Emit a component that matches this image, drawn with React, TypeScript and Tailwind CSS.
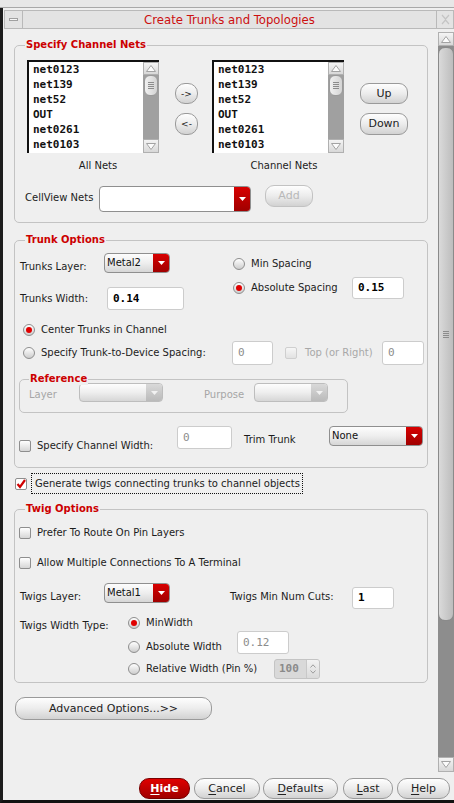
import React from "react";

const F = "font-['DejaVu_Sans',sans-serif]";
const MONO = "font-['DejaVu_Sans_Mono',monospace]";

function Legend({ children, className = "" }: { children: React.ReactNode; className?: string }) {
  return (
    <span className={`absolute -top-[7px] px-[1px] bg-[#efefef] text-[#cc0000] font-bold text-[10px] leading-[12px] ${className}`}>
      {children}
    </span>
  );
}

function DownTri({ color = "#fff" }: { color?: string }) {
  return (
    <svg width="7" height="4" viewBox="0 0 7 4">
      <polygon points="0,0 7,0 3.5,4" fill={color} />
    </svg>
  );
}

function Combo({
  className,
  label = "",
  disabled = false,
  white = false,
}: {
  className: string;
  label?: string;
  disabled?: boolean;
  white?: boolean;
}) {
  return (
    <div
      className={`flex shrink-0 rounded-[4px] border overflow-hidden ${
        disabled ? "border-[#bdbdbd]" : "border-[#8f8f8f]"
      } ${white ? "bg-white" : "bg-linear-to-b from-[#fdfdfd] via-[#eeeeee] to-[#d6d6d6]"} ${className}`}
    >
      <div className="flex-1 pl-[2px] flex items-center text-[#111]">{label}</div>
      <div
        className={`w-[16px] flex items-center justify-center ${
          disabled ? "bg-linear-to-b from-[#d9d9d9] to-[#bababa]" : "bg-linear-to-b from-[#d80000] to-[#a00000]"
        }`}
      >
        <DownTri color={disabled ? "#f2f2f2" : "#fff"} />
      </div>
    </div>
  );
}

function Btn({
  className,
  children,
  disabled = false,
}: {
  className: string;
  children: React.ReactNode;
  disabled?: boolean;
}) {
  return (
    <div
      className={`flex shrink-0 items-center justify-center rounded-[9px] border bg-linear-to-b from-[#fefefe] via-[#ececec] to-[#d2d2d2] ${
        disabled ? "text-[#b8b8b8] border-[#c2c2c2]" : "text-[#222] border-[#9a9a9a]"
      } ${className}`}
    >
      {children}
    </div>
  );
}

function Radio({ on = false }: { on?: boolean }) {
  return (
    <div className="w-[12px] h-[12px] shrink-0 rounded-full border border-[#8e8e8e] bg-linear-to-b from-[#ffffff] to-[#cdcdcd] flex items-center justify-center">
      {on && <div className="w-[6px] h-[6px] rounded-full bg-[#e00000]" />}
    </div>
  );
}

function Check({ on = false, disabled = false }: { on?: boolean; disabled?: boolean }) {
  return (
    <div
      className={`w-[12px] h-[12px] shrink-0 rounded-[2px] border flex items-center justify-center ${
        disabled
          ? "border-[#cfcfcf] bg-linear-to-b from-[#f6f6f6] to-[#e2e2e2]"
          : on
          ? "border-[#8e8e8e] bg-white"
          : "border-[#8e8e8e] bg-linear-to-b from-[#ffffff] to-[#d6d6d6]"
      }`}
    >
      {on && (
        <svg width="10" height="10" viewBox="0 0 10 10">
          <path d="M1.5 5 L4 8 L9 1" fill="none" stroke="#d00000" strokeWidth="2.2" />
        </svg>
      )}
    </div>
  );
}

function Field({
  className,
  value,
  disabled = false,
}: {
  className: string;
  value: string;
  disabled?: boolean;
}) {
  return (
    <div
      className={`shrink-0 bg-white border border-[#cccccc] rounded-[3px] flex items-center pl-[5px] ${MONO} text-[11px] ${
        disabled ? "text-[#8c8c8c]" : "text-black font-bold"
      } ${className}`}
    >
      {value}
    </div>
  );
}

function ScrollArrow({ up, className }: { up: boolean; className: string }) {
  return (
    <div
      className={`flex items-center justify-center bg-linear-to-b from-[#f4f4f4] to-[#d8d8d8] border border-[#b0b0b0] ${className}`}
    >
      <svg width="10" height="7" viewBox="0 0 10 7">
        {up ? (
          <polygon points="5,0.5 9.5,6.5 0.5,6.5" fill="#fbfbfb" stroke="#a3a3a3" />
        ) : (
          <polygon points="0.5,0.5 9.5,0.5 5,6.5" fill="#fbfbfb" stroke="#a3a3a3" />
        )}
      </svg>
    </div>
  );
}

function Grip() {
  return (
    <div className="flex flex-col gap-[1px]">
      <div className="w-[6px] h-[1px] bg-[#8c8c8c]" />
      <div className="w-[6px] h-[1px] bg-[#8c8c8c]" />
      <div className="w-[6px] h-[1px] bg-[#8c8c8c]" />
      <div className="w-[6px] h-[1px] bg-[#8c8c8c]" />
    </div>
  );
}

function ListBox({ items }: { items: string[] }) {
  return (
    <div className="w-[132px] h-[93px] shrink-0 flex border-t-2 border-l-2 border-t-[#111] border-l-[#111] bg-white">
      <div className={`flex-1 pl-[4px] ${MONO} text-[11px] leading-[15px] font-bold text-[#111]`}>
        {items.map((t) => (
          <div key={t}>{t}</div>
        ))}
      </div>
      <div className="w-[16px] flex flex-col bg-[#a0a0a0]">
        <ScrollArrow up className="h-[13px]" />
        <div className="h-[21px] mx-[1px] rounded-[6px] border border-[#9a9a9a] bg-linear-to-r from-[#f0f0f0] to-[#d4d4d4] flex items-center justify-center">
          <Grip />
        </div>
        <div className="flex-1" />
        <ScrollArrow up={false} className="h-[14px]" />
      </div>
    </div>
  );
}

function Box({
  className,
  legend,
  legendClass = "left-[10px]",
  children,
}: {
  className: string;
  legend: string;
  legendClass?: string;
  children: React.ReactNode;
}) {
  return (
    <div className={`relative shrink-0 border border-[#c3c3c3] rounded-[5px] ${className}`}>
      <Legend className={legendClass}>{legend}</Legend>
      {children}
    </div>
  );
}

const nets = ["net0123", "net139", "net52", "OUT", "net0261", "net0103"];

export default function App() {
  return (
    <div className={`w-[454px] h-[803px] bg-[#efefef] flex flex-col overflow-hidden ${F} text-[10px] leading-[12px] text-[#1c1c1c]`}>
      <div className="h-[8px] shrink-0 bg-[#e7e7e7] border-b border-[#a8a8a8]" />
      <div className="flex-1 flex flex-col border-l-[3px] border-l-[#1c1c1c] border-b-[3px] border-b-[#111]">
        {/* title bar */}
        <div className="mt-[2px] ml-[1px] h-[19px] shrink-0 flex border border-[#b9b9b9] bg-[#e3e3e3]">
          <div className="w-[18px] border-r border-[#b9b9b9] flex items-center justify-center">
            <div className="w-[9px] h-[3px] border border-[#a0a0a0] bg-[#f6f6f6]" />
          </div>
          <div className="flex-1 text-center text-[#cc1010] text-[13px] leading-[17px] font-['DejaVu_Sans_Condensed','DejaVu_Sans',sans-serif]">
            Create Trunks and Topologies
          </div>
          <div className="w-[17px] border-l border-[#b9b9b9] flex items-center justify-center">
            <svg width="9" height="11" viewBox="0 0 9 11">
              <path d="M1 1 L4.5 5 L8 1 M1 10 L4.5 6 L8 10" fill="none" stroke="#c4c4c4" strokeWidth="1.2" />
            </svg>
          </div>
        </div>

        {/* main */}
        <div className="flex h-[747px] shrink-0">
          <div className="w-[435px] flex flex-col">
            {/* Specify Channel Nets */}
            <Box className="mt-[16px] ml-[11px] w-[414px] h-[178px]" legend="Specify Channel Nets">
              <div className="flex pt-[14px] pl-[12px]">
                <ListBox items={nets} />
                <div className="ml-[16px] w-[23px] pt-[23px] flex flex-col">
                  <Btn className="h-[21px] rounded-[10px] text-[9px]">-&gt;</Btn>
                  <Btn className="mt-[9px] h-[22px] rounded-[10px] text-[9px]">&lt;-</Btn>
                </div>
                <div className="ml-[14px]">
                  <ListBox items={nets} />
                </div>
                <div className="ml-[16px] w-[48px] pt-[23px] flex flex-col">
                  <Btn className="h-[21px] text-[11px]">Up</Btn>
                  <Btn className="mt-[9px] h-[22px] text-[11px]">Down</Btn>
                </div>
              </div>
              <div className="flex mt-[7px] pl-[12px]">
                <div className="w-[132px] pl-[10px] text-center">All Nets</div>
                <div className="ml-[53px] w-[132px] pl-[12px] text-center">Channel Nets</div>
              </div>
              <div className="flex items-start mt-[13px] pl-[10px]">
                <div className="w-[74px] mt-[7px]">CellView Nets</div>
                <Combo className="mt-[1px] w-[152px] h-[26px]" white />
                <Btn className="ml-[14px] w-[48px] h-[22px] text-[11px]" disabled>
                  Add
                </Btn>
              </div>
            </Box>

            {/* Trunk Options */}
            <Box className="mt-[17px] ml-[11px] w-[414px] h-[228px]" legend="Trunk Options">
              <div className="flex">
                <div className="w-[218px] pl-[5px] flex flex-col">
                  <div className="mt-[12px] flex">
                    <div className="w-[84px] pt-[8px]">Trunks Layer:</div>
                    <Combo className="w-[66px] h-[20px]" label="Metal2" />
                  </div>
                  <div className="mt-[14px] h-[23px] flex items-center">
                    <div className="w-[87px]">Trunks Width:</div>
                    <Field className="w-[77px] h-[23px]" value="0.14" />
                  </div>
                </div>
                <div className="flex flex-col">
                  <div className="mt-[16px] h-[14px] flex items-center">
                    <Radio />
                    <div className="ml-[6px]">Min Spacing</div>
                  </div>
                  <div className="mt-[6px] h-[22px] flex items-center">
                    <Radio on />
                    <div className="ml-[6px] w-[101px]">Absolute Spacing</div>
                    <Field className="w-[52px] h-[22px]" value="0.15" />
                  </div>
                </div>
              </div>
              <div className="mt-[13px] h-[14px] pl-[8px] flex items-center">
                <Radio on />
                <div className="ml-[6px]">Center Trunks in Channel</div>
              </div>
              <div className="mt-[4px] h-[24px] pl-[8px] flex items-center">
                <Radio />
                <div className="ml-[6px] w-[191px]">Specify Trunk-to-Device Spacing:</div>
                <Field className="w-[41px] h-[24px]" value="0" disabled />
                <div className="ml-[12px]">
                  <Check disabled />
                </div>
                <div className="ml-[8px] w-[77px] text-[#a8a8a8]">Top (or Right)</div>
                <Field className="w-[42px] h-[24px]" value="0" disabled />
              </div>
              <Box className="mt-[14px] ml-[4px] w-[329px] h-[34px]" legend="Reference" legendClass="left-[9px]">
                <div className="flex pt-[3px] pl-[9px] text-[#a6a6a6]">
                  <div className="w-[50px] pt-[6px]">Layer</div>
                  <Combo className="w-[84px] h-[19px]" disabled />
                  <div className="ml-[41px] w-[50px] pt-[6px]">Purpose</div>
                  <Combo className="w-[74px] h-[19px]" disabled />
                </div>
              </Box>
              <div className="mt-[13px] ml-[4px] flex items-start">
                <div className="mt-[14px] h-[12px] flex items-center">
                  <Check />
                  <div className="ml-[6px] w-[140px]">Specify Channel Width:</div>
                </div>
                <Field className="w-[55px] h-[23px]" value="0" disabled />
                <div className="ml-[12px] mt-[8px] w-[85px]">Trim Trunk</div>
                <Combo className="w-[94px] h-[20px]" label="None" />
              </div>
            </Box>

            {/* Generate twigs */}
            <div className="mt-[5px] ml-[12px] h-[21px] flex items-center shrink-0">
              <Check on />
              <div className="ml-[4px] w-[272px] h-[21px] border border-dotted border-[#111] pl-[3px] flex items-center">
                Generate twigs connecting trunks to channel objects
              </div>
            </div>

            {/* Twig Options */}
            <Box className="mt-[15px] ml-[11px] w-[414px] h-[174px]" legend="Twig Options">
              <div className="mt-[17px] ml-[4px] h-[12px] flex items-center">
                <Check />
                <div className="ml-[6px]">Prefer To Route On Pin Layers</div>
              </div>
              <div className="mt-[18px] ml-[4px] h-[12px] flex items-center">
                <Check />
                <div className="ml-[6px]">Allow Multiple Connections To A Terminal</div>
              </div>
              <div className="mt-[14px] pl-[5px] flex items-start">
                <div className="w-[84px] pt-[8px]">Twigs Layer:</div>
                <Combo className="w-[66px] h-[20px]" label="Metal1" />
                <div className="ml-[60px] mt-[8px] w-[122px]">Twigs Min Num Cuts:</div>
                <Field className="mt-[4px] w-[42px] h-[22px]" value="1" />
              </div>
              <div className="mt-[8px] pl-[5px] flex">
                <div className="w-[108px] pt-[3px]">Twigs Width Type:</div>
                <div className="flex flex-col">
                  <div className="h-[12px] flex items-center">
                    <Radio on />
                    <div className="ml-[6px]">MinWidth</div>
                  </div>
                  <div className="mt-[2px] flex items-start">
                    <div className="mt-[10px]">
                      <Radio />
                    </div>
                    <div className="ml-[6px] mt-[10px] w-[91px]">Absolute Width</div>
                    <Field className="w-[52px] h-[23px]" value="0.12" disabled />
                  </div>
                  <div className="mt-[5px] h-[20px] flex items-center">
                    <Radio />
                    <div className="ml-[6px] w-[128px]">Relative Width (Pin %)</div>
                    <div className="w-[46px] h-[20px] flex rounded-[3px] border border-[#c4c4c4] bg-[#d9d9d9] overflow-hidden">
                      <div className={`flex-1 pl-[4px] flex items-center ${MONO} text-[11px] font-bold text-[#8a8a8a]`}>100</div>
                      <div className="w-[13px] flex flex-col items-center justify-center gap-[2px] bg-linear-to-b from-[#f2f2f2] to-[#dadada] border-l border-[#c8c8c8]">
                        <svg width="6" height="4" viewBox="0 0 6 4">
                          <path d="M0.5 3.5 L3 0.8 L5.5 3.5" fill="none" stroke="#9c9c9c" />
                        </svg>
                        <svg width="6" height="4" viewBox="0 0 6 4">
                          <path d="M0.5 0.5 L3 3.2 L5.5 0.5" fill="none" stroke="#9c9c9c" />
                        </svg>
                      </div>
                    </div>
                  </div>
                </div>
              </div>
            </Box>

            <Btn className="mt-[14px] ml-[12px] w-[197px] h-[23px] rounded-[10px] text-[11px]">Advanced Options...&gt;&gt;</Btn>
          </div>

          {/* main scrollbar */}
          <div className="w-[16px] mt-[3px] h-[740px] flex flex-col bg-[#8d8d8d]">
            <ScrollArrow up className="h-[14px]" />
            <div className="mt-[1px] h-[574px] rounded-b-[7px] rounded-t-[7px] border border-[#8a8a8a] bg-linear-to-r from-[#dadada] to-[#bdbdbd] flex items-center justify-center">
              <Grip />
            </div>
            <div className="flex-1" />
            <ScrollArrow up={false} className="h-[15px]" />
          </div>
        </div>

        {/* bottom buttons */}
        <div className="mt-[2px] h-[21px] shrink-0 flex text-[11px]">
          <div className="ml-[136px] w-[51px] h-[21px] rounded-[10px] border border-[#7a0000] bg-linear-to-b from-[#e00000] to-[#a00000] text-white font-bold flex items-center justify-center">
            <span>
              <u className="underline-offset-2">H</u>ide
            </span>
          </div>
          <Btn className="ml-[4px] w-[66px] h-[21px] rounded-[10px]">
            <span>
              <u className="underline-offset-2">C</u>ancel
            </span>
          </Btn>
          <Btn className="ml-[3px] w-[75px] h-[21px] rounded-[10px]">
            <span>
              <u className="underline-offset-2">D</u>efaults
            </span>
          </Btn>
          <Btn className="ml-[5px] w-[50px] h-[21px] rounded-[10px]">
            <span>
              <u className="underline-offset-2">L</u>ast
            </span>
          </Btn>
          <Btn className="ml-[4px] w-[53px] h-[21px] rounded-[10px]">
            <span>
              <u className="underline-offset-2">H</u>elp
            </span>
          </Btn>
        </div>
      </div>
    </div>
  );
}
